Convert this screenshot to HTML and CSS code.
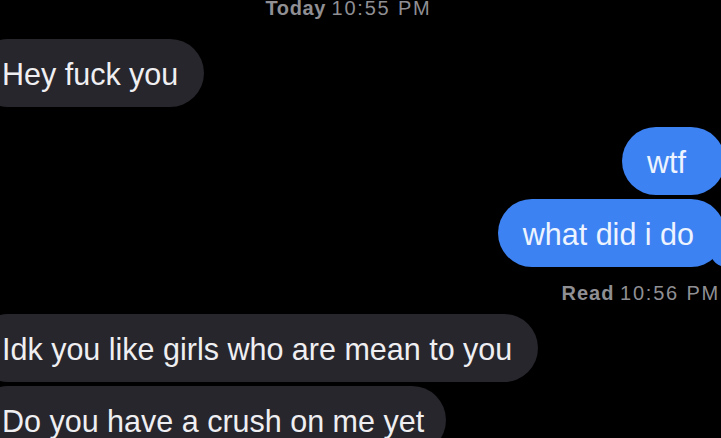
FILE: index.html
```html
<!DOCTYPE html>
<html lang="en">
<head>
<meta charset="utf-8">
<title>Messages</title>
<link rel="stylesheet" href="styles.css">
</head>
<body>
<div class="chat">
  <div class="stamp"><b class="stamp-day">Today</b> <span class="stamp-time">10:55 PM</span></div>

  <div class="bubble them first">Hey fuck you</div>

  <div class="bubble me short gap-top">wtf</div>
  <div class="bubble me long tail">what did i do</div>

  <div class="receipt"><b class="receipt-label">Read</b> <span class="stamp-time">10:56 PM</span></div>

  <div class="bubble them">Idk you like girls who are mean to you</div>
  <div class="bubble them next">Do you have a crush on me yet</div>
</div>
</body>
</html>
```

FILE: styles.css
```css
html, body {
  margin: 0;
  padding: 0;
  background: #000;
}

body {
  width: 721px;
  height: 438px;
  overflow: hidden;
  font-family: "Liberation Sans", Arial, sans-serif;
}

.chat {
  display: flex;
  flex-direction: column;
  align-items: flex-start;
}

.stamp {
  align-self: stretch;
  margin-top: -2px;
  padding-right: 24px;
  text-align: center;
  font-size: 20px;
  line-height: 20px;
  color: #8f8f94;
}

.stamp-day,
.receipt-label {
  font-weight: 700;
  letter-spacing: 0.6px;
}

.stamp-time {
  letter-spacing: 1.8px;
}

.bubble {
  position: relative;
  font-size: 30.5px;
  line-height: 36px;
  padding: 17px 26px 15px 28px;
  border-radius: 34px;
  white-space: nowrap;
}

.them {
  background: #27262c;
  color: #efeff2;
  margin-left: -26px;
}

.them.first {
  margin-top: 21px;
}

.them.next {
  margin-top: 4px;
  padding-right: 22px;
}

.me {
  align-self: flex-end;
  background: #3d82f2;
  color: #eef4ff;
  margin-right: -4px;
  padding-left: 25px;
}

.me.short {
  padding-right: 39px;
}

.me.long {
  padding-right: 31px;
  margin-top: 4px;
}

.gap-top {
  margin-top: 20px;
}

.tail::before {
  content: "";
  position: absolute;
  bottom: 0;
  right: -8px;
  width: 22px;
  height: 24px;
  background: #3d82f2;
  border-bottom-left-radius: 16px 14px;
}

.tail::after {
  content: "";
  position: absolute;
  bottom: 0;
  right: -22px;
  width: 14px;
  height: 24px;
  background: #000;
  border-bottom-left-radius: 10px;
}

.receipt {
  align-self: flex-end;
  margin-top: 16px;
  margin-bottom: 11px;
  padding-right: 1px;
  font-size: 20px;
  line-height: 20px;
  color: #8f8f94;
}

.receipt .receipt-label {
  letter-spacing: 1px;
}
```
